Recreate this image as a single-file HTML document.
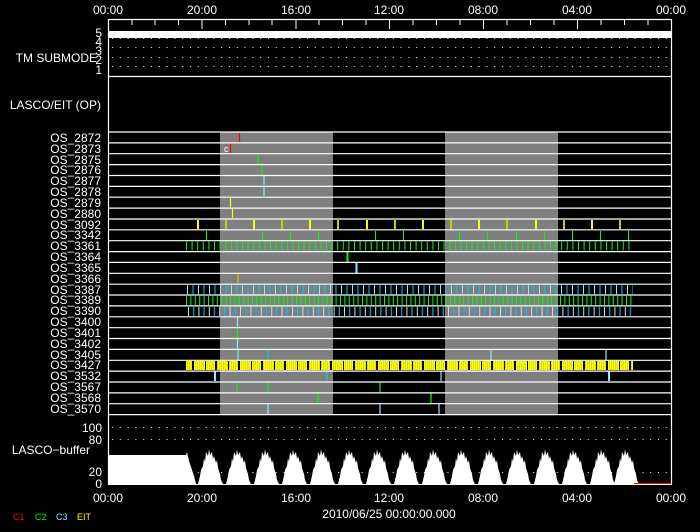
<!DOCTYPE html>
<html><head><meta charset="utf-8"><style>
html,body{margin:0;padding:0;background:#000;width:700px;height:532px;overflow:hidden}
svg{display:block}
text{font-family:"Liberation Sans",sans-serif;fill:#fff;font-size:12px}
</style></head><body>
<svg width="700" height="532" viewBox="0 0 700 532" xmlns="http://www.w3.org/2000/svg">
<defs>
<pattern id="dots" x="109" y="0" width="7.8" height="1" patternUnits="userSpaceOnUse"><rect x="3" y="0" width="1" height="1" fill="#fff"/></pattern>
<pattern id="g1" x="186" y="0" width="5.6" height="20" patternUnits="userSpaceOnUse"><rect x="0" y="0" width="1" height="20" fill="#0f0"/></pattern>
<pattern id="c1" x="187" y="0" width="11" height="20" patternUnits="userSpaceOnUse"><rect x="0" y="0" width="1" height="20" fill="#8ef"/><rect x="5.5" y="0" width="1" height="20" fill="#0cf"/></pattern>
<pattern id="g2" x="186" y="0" width="4.4" height="20" patternUnits="userSpaceOnUse"><rect x="0" y="0" width="1" height="20" fill="#0f0"/></pattern>
<pattern id="c2" x="188" y="0" width="10.4" height="20" patternUnits="userSpaceOnUse"><rect x="0" y="0" width="1" height="20" fill="#cde"/><rect x="5.2" y="0" width="1" height="20" fill="#0cf"/></pattern>
<pattern id="y1" x="186" y="0" width="2" height="20" patternUnits="userSpaceOnUse"><rect x="0" y="0" width="2" height="20" fill="#ff0"/><rect x="1" y="0" width="0.6" height="20" fill="#cc0"/></pattern>
<pattern id="y1gap" x="192" y="0" width="23" height="20" patternUnits="userSpaceOnUse"><rect x="0" y="0" width="2" height="20" fill="#000"/><rect x="13" y="0" width="1" height="20" fill="#000"/></pattern>
<path id="h" d="M0,484 L2,476 L3,470 L5,466 L6,458 L7,462 L8,452 L10,456 L11,449 L12,455 L14,452 L15,459 L16,456 L18,463 L19,460 L20,468 L22,474 L23,480 L25,484 Z" fill="#fff"/>
</defs>

<text x="108" y="14" text-anchor="middle">00:00</text>
<text x="202" y="14" text-anchor="middle">20:00</text>
<text x="296" y="14" text-anchor="middle">16:00</text>
<text x="389" y="14" text-anchor="middle">12:00</text>
<text x="483" y="14" text-anchor="middle">08:00</text>
<text x="577" y="14" text-anchor="middle">04:00</text>
<text x="671" y="14" text-anchor="middle">00:00</text>

<rect x="220" y="132" width="113" height="282" fill="#7f7f7f"/>
<rect x="445" y="132" width="113" height="282" fill="#7f7f7f"/>

<rect x="109" y="31" width="562" height="7" fill="#fff"/>
<rect x="109" y="38" width="562" height="1" fill="url(#dots)"/>
<rect x="109" y="47" width="562" height="1" fill="url(#dots)"/>
<rect x="109" y="57" width="562" height="1" fill="url(#dots)"/>
<rect x="109" y="66" width="562" height="1" fill="url(#dots)"/>
<text x="102" y="37" text-anchor="end">5</text>
<text x="102" y="46" text-anchor="end">4</text>
<text x="102" y="55" text-anchor="end">3</text>
<text x="102" y="64" text-anchor="end">2</text>
<text x="102" y="74" text-anchor="end">1</text>
<text x="97" y="62" text-anchor="end">TM SUBMODE</text>
<text x="101" y="109" text-anchor="end">LASCO/EIT (OP)</text>

<g stroke="#fff" stroke-width="1.2">
<line x1="108.5" y1="19.5" x2="671.5" y2="19.5"/>
<line x1="108.5" y1="19" x2="108.5" y2="485"/>
<line x1="671.5" y1="19" x2="671.5" y2="485"/>
<line x1="108" y1="76.5" x2="672" y2="76.5"/>
</g>
<g stroke="#fff" stroke-width="1">
<line x1="132" y1="19" x2="132" y2="25"/><line x1="155" y1="19" x2="155" y2="25"/><line x1="178.5" y1="19" x2="178.5" y2="25"/>
<line x1="202" y1="19" x2="202" y2="29"/>
<line x1="225.5" y1="19" x2="225.5" y2="25"/><line x1="249" y1="19" x2="249" y2="25"/><line x1="272" y1="19" x2="272" y2="25"/>
<line x1="296" y1="19" x2="296" y2="29"/>
<line x1="319" y1="19" x2="319" y2="25"/><line x1="342.5" y1="19" x2="342.5" y2="25"/><line x1="366" y1="19" x2="366" y2="25"/>
<line x1="389.5" y1="19" x2="389.5" y2="29"/>
<line x1="413" y1="19" x2="413" y2="25"/><line x1="436.5" y1="19" x2="436.5" y2="25"/><line x1="460" y1="19" x2="460" y2="25"/>
<line x1="483.5" y1="19" x2="483.5" y2="29"/>
<line x1="507" y1="19" x2="507" y2="25"/><line x1="530.5" y1="19" x2="530.5" y2="25"/><line x1="554" y1="19" x2="554" y2="25"/>
<line x1="577.5" y1="19" x2="577.5" y2="29"/>
<line x1="601" y1="19" x2="601" y2="25"/><line x1="624.5" y1="19" x2="624.5" y2="25"/><line x1="648" y1="19" x2="648" y2="25"/>
</g>

<rect x="186" y="241.5" width="447" height="9" fill="url(#g1)"/>
<rect x="187" y="285" width="446" height="9" fill="url(#c1)"/>
<rect x="186" y="296" width="446" height="9" fill="url(#g2)"/>
<rect x="188" y="307" width="445" height="9" fill="url(#c2)"/>
<rect x="186" y="361" width="447" height="9" fill="url(#y1)"/>
<rect x="186" y="361" width="447" height="9" fill="url(#y1gap)"/>

<g stroke-width="1.2">
<line x1="239.5" y1="133" x2="239.5" y2="143" stroke="#f00"/>
<line x1="230.5" y1="144" x2="230.5" y2="154" stroke="#f00"/>
<line x1="258" y1="155" x2="258" y2="164" stroke="#0f0"/>
<line x1="262" y1="165" x2="262" y2="175" stroke="#0f0"/>
<line x1="264" y1="176" x2="264" y2="185" stroke="#8ef"/>
<line x1="264" y1="186" x2="264" y2="196" stroke="#8ef"/>
<line x1="230.5" y1="197" x2="230.5" y2="207" stroke="#ff0"/>
<line x1="232.5" y1="208" x2="232.5" y2="218" stroke="#ff0"/>
<line x1="238" y1="273" x2="238" y2="283" stroke="#cc0"/>
<line x1="237.5" y1="317" x2="237.5" y2="327" stroke="#8ef"/>
<line x1="237.5" y1="328" x2="237.5" y2="338" stroke="#0f0"/>
<line x1="237.5" y1="339" x2="237.5" y2="349" stroke="#8ef"/>
<line x1="238" y1="350" x2="238" y2="360" stroke="#8ef"/>
<line x1="268" y1="350" x2="268" y2="360" stroke="#0cf"/>
<line x1="491" y1="350" x2="491" y2="360" stroke="#8ef"/>
<line x1="606" y1="350" x2="606" y2="360" stroke="#8ef"/>
<line x1="215" y1="371" x2="215" y2="381" stroke="#8ef" stroke-width="2"/>
<line x1="327" y1="371" x2="327" y2="381" stroke="#0cf"/>
<line x1="441" y1="371" x2="441" y2="381" stroke="#8ef"/>
<line x1="609" y1="371" x2="609" y2="381" stroke="#8ef" stroke-width="2"/>
<line x1="237" y1="382" x2="237" y2="392" stroke="#0f0"/>
<line x1="268" y1="382" x2="268" y2="392" stroke="#0f0"/>
<line x1="380" y1="382" x2="380" y2="392" stroke="#0f0"/>
<line x1="318" y1="393" x2="318" y2="403" stroke="#0f0"/>
<line x1="431" y1="393" x2="431" y2="403" stroke="#0f0"/>
<line x1="268" y1="404" x2="268" y2="414" stroke="#8ef"/>
<line x1="380" y1="404" x2="380" y2="414" stroke="#8ef"/>
<line x1="439" y1="404" x2="439" y2="414" stroke="#8ef"/>
<line x1="347.5" y1="252" x2="347.5" y2="262" stroke="#0f0" stroke-width="2"/>
<line x1="356.5" y1="263" x2="356.5" y2="273" stroke="#8ef" stroke-width="2"/>
</g>
<text x="224" y="152" style="font-size:9px">c</text>
<g stroke-width="2">
<line x1="198" y1="220" x2="198" y2="229" stroke="#ff0"/><line x1="226" y1="220" x2="226" y2="229" stroke="#cc0"/>
<line x1="254" y1="220" x2="254" y2="229" stroke="#ff0"/><line x1="282" y1="220" x2="282" y2="229" stroke="#cc0"/>
<line x1="310" y1="220" x2="310" y2="229" stroke="#ff0"/><line x1="338" y1="220" x2="338" y2="229" stroke="#cc0"/>
<line x1="367" y1="220" x2="367" y2="229" stroke="#ff0"/><line x1="395" y1="220" x2="395" y2="229" stroke="#cc0"/>
<line x1="423" y1="220" x2="423" y2="229" stroke="#ff0"/><line x1="451" y1="220" x2="451" y2="229" stroke="#cc0"/>
<line x1="479" y1="220" x2="479" y2="229" stroke="#ff0"/><line x1="507" y1="220" x2="507" y2="229" stroke="#cc0"/>
<line x1="536" y1="220" x2="536" y2="229" stroke="#ff0"/><line x1="564" y1="220" x2="564" y2="229" stroke="#cc0"/>
<line x1="592" y1="220" x2="592" y2="229" stroke="#ff0"/><line x1="620" y1="220" x2="620" y2="229" stroke="#cc0"/>
</g>
<g stroke="#0f0" stroke-width="1">
<line x1="206.5" y1="231" x2="206.5" y2="240"/><line x1="262.5" y1="231" x2="262.5" y2="240"/><line x1="290.5" y1="231" x2="290.5" y2="240"/>
<line x1="318.5" y1="231" x2="318.5" y2="240"/><line x1="375.5" y1="231" x2="375.5" y2="240"/><line x1="403.5" y1="231" x2="403.5" y2="240"/>
<line x1="459.5" y1="231" x2="459.5" y2="240"/><line x1="487.5" y1="231" x2="487.5" y2="240"/><line x1="516.5" y1="231" x2="516.5" y2="240"/>
<line x1="544.5" y1="231" x2="544.5" y2="240"/><line x1="572.5" y1="231" x2="572.5" y2="240"/><line x1="600.5" y1="231" x2="600.5" y2="240"/><line x1="628.5" y1="231" x2="628.5" y2="240"/>
</g>

<g stroke="#fff" stroke-width="1.2">
<line x1="108" y1="132" x2="672" y2="132"/><line x1="108" y1="142.9" x2="672" y2="142.9"/><line x1="108" y1="153.7" x2="672" y2="153.7"/><line x1="108" y1="164.6" x2="672" y2="164.6"/>
<line x1="108" y1="175.5" x2="672" y2="175.5"/><line x1="108" y1="186.4" x2="672" y2="186.4"/><line x1="108" y1="197.2" x2="672" y2="197.2"/><line x1="108" y1="208.1" x2="672" y2="208.1"/>
<line x1="108" y1="219" x2="672" y2="219"/><line x1="108" y1="229.8" x2="672" y2="229.8"/><line x1="108" y1="240.7" x2="672" y2="240.7"/><line x1="108" y1="251.6" x2="672" y2="251.6"/>
<line x1="108" y1="262.4" x2="672" y2="262.4"/><line x1="108" y1="273.3" x2="672" y2="273.3"/><line x1="108" y1="284.2" x2="672" y2="284.2"/><line x1="108" y1="295" x2="672" y2="295"/>
<line x1="108" y1="305.9" x2="672" y2="305.9"/><line x1="108" y1="316.8" x2="672" y2="316.8"/><line x1="108" y1="327.7" x2="672" y2="327.7"/><line x1="108" y1="338.5" x2="672" y2="338.5"/>
<line x1="108" y1="349.4" x2="672" y2="349.4"/><line x1="108" y1="360.3" x2="672" y2="360.3"/><line x1="108" y1="371.1" x2="672" y2="371.1"/><line x1="108" y1="382" x2="672" y2="382"/>
<line x1="108" y1="392.9" x2="672" y2="392.9"/><line x1="108" y1="403.7" x2="672" y2="403.7"/><line x1="108" y1="414.6" x2="672" y2="414.6"/>
</g>
<g text-anchor="end">
<text x="101" y="142">OS_2872</text><text x="101" y="153">OS_2873</text><text x="101" y="164">OS_2875</text><text x="101" y="174">OS_2876</text>
<text x="101" y="185">OS_2877</text><text x="101" y="196">OS_2878</text><text x="101" y="207">OS_2879</text><text x="101" y="218">OS_2880</text>
<text x="101" y="229">OS_3092</text><text x="101" y="239">OS_3342</text><text x="101" y="250">OS_3361</text><text x="101" y="261">OS_3364</text>
<text x="101" y="272">OS_3365</text><text x="101" y="283">OS_3366</text><text x="101" y="294">OS_3387</text><text x="101" y="304">OS_3389</text>
<text x="101" y="315">OS_3390</text><text x="101" y="326">OS_3400</text><text x="101" y="337">OS_3401</text><text x="101" y="348">OS_3402</text>
<text x="101" y="359">OS_3405</text><text x="101" y="369">OS_3427</text><text x="101" y="380">OS_3532</text><text x="101" y="391">OS_3567</text>
<text x="101" y="402">OS_3568</text><text x="101" y="413">OS_3570</text>
</g>

<rect x="109" y="427" width="562" height="1" fill="url(#dots)"/>
<rect x="109" y="439" width="562" height="1" fill="url(#dots)"/>
<rect x="109" y="472" width="562" height="1" fill="url(#dots)"/>
<text x="102" y="432" text-anchor="end">100</text>
<text x="102" y="444" text-anchor="end">80</text>
<text x="90" y="454" text-anchor="end">LASCO−buffer</text>
<text x="102" y="476" text-anchor="end">20</text>
<text x="102" y="488" text-anchor="end">0</text>
<polygon points="109,455 186,455 187,452 189,461 190,464 192,470 194,476 196,484 109,484" fill="#fff"/>
<use href="#h" x="198"/><use href="#h" x="226"/><use href="#h" x="254"/><use href="#h" x="282"/>
<use href="#h" x="310"/><use href="#h" x="338"/><use href="#h" x="366"/><use href="#h" x="394"/>
<use href="#h" x="422"/><use href="#h" x="450"/><use href="#h" x="478"/><use href="#h" x="506"/>
<use href="#h" x="534"/><use href="#h" x="562"/><use href="#h" x="590"/><use href="#h" x="614"/>
<line x1="634" y1="483.5" x2="671" y2="483.5" stroke="#f00" stroke-width="1"/>
<line x1="108" y1="484.5" x2="672" y2="484.5" stroke="#fff" stroke-width="1"/>

<text x="108" y="502" text-anchor="middle">00:00</text>
<text x="202" y="502" text-anchor="middle">20:00</text>
<text x="296" y="502" text-anchor="middle">16:00</text>
<text x="389" y="502" text-anchor="middle">12:00</text>
<text x="483" y="502" text-anchor="middle">08:00</text>
<text x="577" y="502" text-anchor="middle">04:00</text>
<text x="671" y="502" text-anchor="middle">00:00</text>
<text x="389" y="518" text-anchor="middle">2010/06/25 00:00:00.000</text>
<text x="13" y="520" style="font-size:9px;fill:#f00">C1</text>
<text x="35" y="520" style="font-size:9px;fill:#0f0">C2</text>
<text x="56" y="520" style="font-size:9px;fill:#8ef">C3</text>
<text x="77" y="520" style="font-size:9px;fill:#ff0">EIT</text>
</svg>
</body></html>
